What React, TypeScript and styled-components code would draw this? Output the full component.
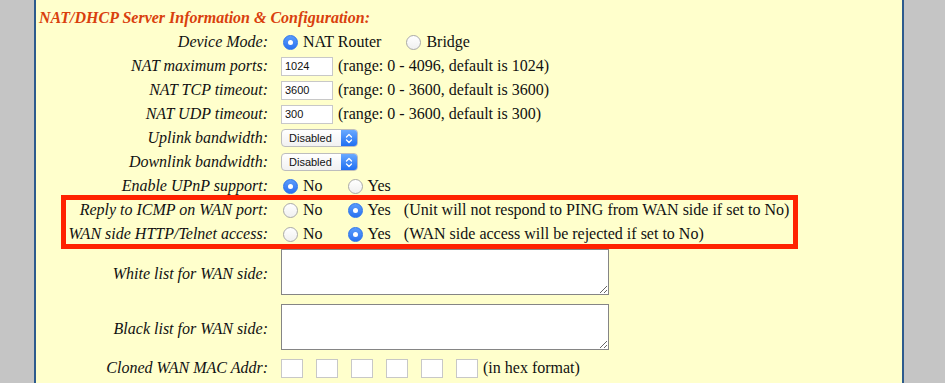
import React from "react";
import styled, { createGlobalStyle } from "styled-components";

const GlobalStyle = createGlobalStyle`
  html, body {
    margin: 0;
    padding: 0;
    background: #c5c5c5;
    overflow: hidden;
  }
`;

const Page = styled.div`
  display: flex;
  padding-left: 34px;
  height: 383px;
  overflow: hidden;
`;

const Panel = styled.div`
  width: 866px;
  min-height: 383px;
  background: #ffffcc;
  border-left: 2px solid #2d5b8d;
  border-right: 2px solid #2d5b8d;
  font-family: "Liberation Serif", "Times New Roman", serif;
  color: #111;
`;

const Title = styled.div`
  box-sizing: border-box;
  height: 30px;
  padding: 6px 0 0 3px;
  line-height: 24px;
  font-size: 16px;
  font-weight: bold;
  font-style: italic;
  color: #d9400d;
`;

const Row = styled.div`
  display: grid;
  grid-template-columns: 232px 1fr;
  column-gap: 13px;
  align-items: center;
  min-height: 24px;
`;

const Label = styled.div`
  text-align: right;
  font-style: italic;
  font-size: 16px;
  line-height: 24px;
  white-space: nowrap;
`;

const Control = styled.div`
  display: flex;
  align-items: center;
  font-size: 16px;
  line-height: 24px;
  white-space: nowrap;
`;

const Hint = styled.span<{ $gap?: number }>`
  margin-left: ${({ $gap }) => $gap ?? 5}px;
`;

const TextInput = styled.input<{ $w?: number }>`
  box-sizing: border-box;
  width: ${({ $w }) => $w ?? 52}px;
  height: 19px;
  margin: 0;
  padding: 0 3px;
  border: 1px solid #c8c8c8;
  background: #fff;
  font-family: "Liberation Sans", Arial, sans-serif;
  font-size: 11px;
  color: #111;
  outline: none;
`;

const MacGroup = styled.div`
  display: flex;
  gap: 13px;
`;

const SelectBox = styled.div`
  box-sizing: border-box;
  display: inline-flex;
  align-items: stretch;
  width: 77px;
  height: 18px;
  border: 1px solid #bdbdbd;
  border-radius: 4px;
  background: linear-gradient(#ffffff, #f1f1f1);
  overflow: hidden;
  font-family: "Liberation Sans", Arial, sans-serif;
  font-size: 11px;
  line-height: 16px;
  color: #111;
`;

const SelectValue = styled.span`
  flex: 1;
  padding-left: 7px;
`;

const Stepper = styled.span`
  width: 16px;
  display: flex;
  align-items: center;
  justify-content: center;
  background: linear-gradient(#6aaaff, #1f6ff2);
`;

const RadioOption = styled.label`
  display: inline-flex;
  align-items: center;
  gap: 5px;
  margin-right: 23px;
  &:last-of-type {
    margin-right: 0;
  }
`;

const Radio = styled.input.attrs({ type: "radio" })`
  appearance: none;
  box-sizing: border-box;
  width: 15px;
  height: 15px;
  margin: 0 0 0 2px;
  border-radius: 50%;
  border: 1px solid #a9a9a9;
  background: linear-gradient(#ffffff, #f0f0f0);
  display: grid;
  place-items: center;

  &:checked {
    border-color: #2b74ee;
    background: linear-gradient(#5b9cfb, #2a72f0);
  }
  &:checked::after {
    content: "";
    width: 5px;
    height: 5px;
    border-radius: 50%;
    background: #fff;
  }
`;

const TextArea = styled.textarea`
  box-sizing: border-box;
  width: 328px;
  height: 46px;
  margin: 3px 0 6px;
  border: 1px solid #858585;
  background: #fff;
  display: block;
`;

const Highlight = styled.div`
  position: relative;
`;

const HighlightFrame = styled.div`
  position: absolute;
  left: 25px;
  top: -3px;
  width: 737px;
  height: 54px;
  box-sizing: border-box;
  border: 5px solid #ff2200;
  pointer-events: none;
`;

const Chevrons = () => (
  <svg width="8" height="11" viewBox="0 0 8 11">
    <path d="M1.5 4 L4 1.5 L6.5 4 M1.5 7 L4 9.5 L6.5 7" fill="none" stroke="#fff" strokeWidth="1.3" strokeLinecap="round" strokeLinejoin="round" />
  </svg>
);

const Select = ({ value }: { value: string }) => (
  <SelectBox>
    <SelectValue>{value}</SelectValue>
    <Stepper>
      <Chevrons />
    </Stepper>
  </SelectBox>
);

const RadioPair = ({
  name,
  options,
  checked,
}: {
  name: string;
  options: string[];
  checked: number;
}) => (
  <>
    {options.map((o, i) => (
      <RadioOption key={o}>
        <Radio name={name} defaultChecked={i === checked} />
        {o}
      </RadioOption>
    ))}
  </>
);

export default function App() {
  return (
    <>
      <GlobalStyle />
      <Page>
        <Panel>
          <Title>NAT/DHCP Server Information &amp; Configuration:</Title>

          <Row>
            <Label>Device Mode:</Label>
            <Control>
              <RadioPair name="mode" options={["NAT Router", "Bridge"]} checked={0} />
            </Control>
          </Row>
          <Row>
            <Label>NAT maximum ports:</Label>
            <Control>
              <TextInput defaultValue="1024" />
              <Hint>(range: 0 - 4096, default is 1024)</Hint>
            </Control>
          </Row>
          <Row>
            <Label>NAT TCP timeout:</Label>
            <Control>
              <TextInput defaultValue="3600" />
              <Hint>(range: 0 - 3600, default is 3600)</Hint>
            </Control>
          </Row>
          <Row>
            <Label>NAT UDP timeout:</Label>
            <Control>
              <TextInput defaultValue="300" />
              <Hint>(range: 0 - 3600, default is 300)</Hint>
            </Control>
          </Row>
          <Row>
            <Label>Uplink bandwidth:</Label>
            <Control>
              <Select value="Disabled" />
            </Control>
          </Row>
          <Row>
            <Label>Downlink bandwidth:</Label>
            <Control>
              <Select value="Disabled" />
            </Control>
          </Row>
          <Row>
            <Label>Enable UPnP support:</Label>
            <Control>
              <RadioPair name="upnp" options={["No", "Yes"]} checked={0} />
            </Control>
          </Row>

          <Highlight>
            <Row>
              <Label>Reply to ICMP on WAN port:</Label>
              <Control>
                <RadioPair name="icmp" options={["No", "Yes"]} checked={1} />
                <Hint $gap={13}>(Unit will not respond to PING from WAN side if set to No)</Hint>
              </Control>
            </Row>
            <Row>
              <Label>WAN side HTTP/Telnet access:</Label>
              <Control>
                <RadioPair name="http" options={["No", "Yes"]} checked={1} />
                <Hint $gap={13}>(WAN side access will be rejected if set to No)</Hint>
              </Control>
            </Row>
            <HighlightFrame />
          </Highlight>

          <Row>
            <Label>White list for WAN side:</Label>
            <Control>
              <TextArea />
            </Control>
          </Row>
          <Row>
            <Label>Black list for WAN side:</Label>
            <Control>
              <TextArea />
            </Control>
          </Row>
          <Row>
            <Label>Cloned WAN MAC Addr:</Label>
            <Control>
              <MacGroup>
                {[0, 1, 2, 3, 4, 5].map((i) => (
                  <TextInput key={i} $w={22} />
                ))}
              </MacGroup>
              <Hint>(in hex format)</Hint>
            </Control>
          </Row>
        </Panel>
      </Page>
    </>
  );
}
